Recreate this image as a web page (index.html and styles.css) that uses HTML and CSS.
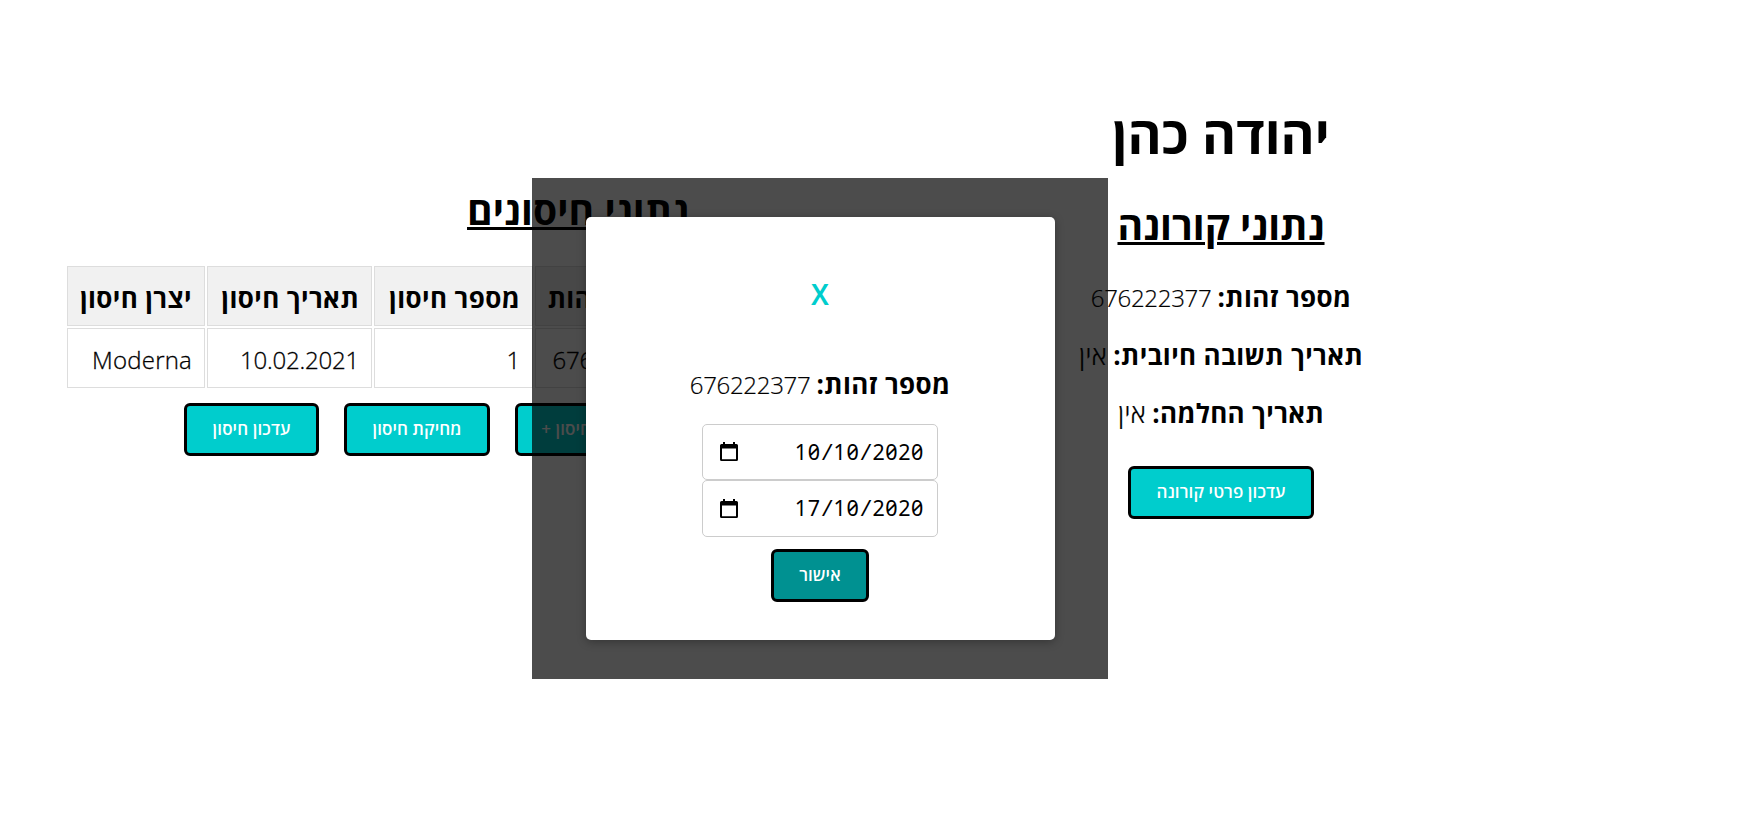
FILE: index.html
```html
<!DOCTYPE html>
<html lang="he">
<head>
<meta charset="utf-8">
<title>יהודה כהן</title>
<link rel="stylesheet" href="styles.css">
</head>
<body>
<main class="page">
  <section class="vaccines">
    <h2 class="vaccines-title" dir="rtl">נתוני חיסונים</h2>
    <table class="table" dir="rtl">
      <colgroup><col class="c-id"><col class="c-num"><col class="c-date"><col class="c-maker"></colgroup>
      <tr><th>מספר זהות</th><th>מספר חיסון</th><th>תאריך חיסון</th><th>יצרן חיסון</th></tr>
      <tr><td>676222377</td><td>1</td><td>10.02.2021</td><td class="maker">Moderna</td></tr>
    </table>
    <div class="actions">
      <button class="btn btn-update" dir="rtl">עדכון חיסון</button>
      <button class="btn btn-delete" dir="rtl">מחיקת חיסון</button>
      <button class="btn btn-add" dir="rtl">הוספת חיסון +</button>
    </div>
  </section>
  <section class="corona" dir="rtl">
    <h1 class="name">יהודה כהן</h1>
    <h2 class="corona-title">נתוני קורונה</h2>
    <p class="fact"><b>מספר זהות:</b> <span>676222377</span></p>
    <p class="fact"><b>תאריך תשובה חיובית:</b> <span class="word">אין</span></p>
    <p class="fact"><b>תאריך החלמה:</b> <span class="word">אין</span></p>
    <button class="btn btn-corona">עדכון פרטי קורונה</button>
  </section>
</main>
<div class="overlay">
  <div class="dialog">
    <button class="close">X</button>
    <p class="fact dialog-fact" dir="rtl"><b>מספר זהות:</b> <span>676222377</span></p>
    <div class="date">
      <svg class="cal" viewBox="0 0 18 20"><path d="M3 0h2v2h8V0h2v2h1.500a1.500 1.500 0 0 1 1.500 1.500v14a1.500 1.500 0 0 1-1.500 1.500h-15A1.500 1.500 0 0 1 0 17.500v-14A1.500 1.500 0 0 1 1.500 2H3zM2 6.500v10.700h14V6.500z" fill-rule="evenodd"/></svg>
      <span class="digits">10<i>/</i>10<i>/</i>2020</span>
    </div>
    <div class="date">
      <svg class="cal" viewBox="0 0 18 20"><path d="M3 0h2v2h8V0h2v2h1.500a1.500 1.500 0 0 1 1.500 1.500v14a1.500 1.500 0 0 1-1.500 1.500h-15A1.500 1.500 0 0 1 0 17.500v-14A1.500 1.500 0 0 1 1.500 2H3zM2 6.500v10.700h14V6.500z" fill-rule="evenodd"/></svg>
      <span class="digits">17<i>/</i>10<i>/</i>2020</span>
    </div>
    <button class="btn btn-ok" dir="rtl">אישור</button>
  </div>
</div>
</body>
</html>
```
FILE: styles.css
```css
* { box-sizing: border-box; }
body { margin: 0; height: 825px; overflow: hidden; position: relative; background: #fff; color: #000; font-family: "Open Sans", "Noto Sans", "DejaVu Sans", sans-serif; font-size: 24px; }
h1, h2, p { margin: 0; white-space: nowrap; }
h1, h2, b { font-weight: 700; }
.page { display: flex; align-items: flex-start; }
.vaccines { width: 1021px; padding: 185px 0 0 65px; }
h2 { height: 50px; line-height: 50px; font-size: 39px; letter-spacing: 0.1px; text-decoration: underline; text-decoration-thickness: 3px; text-underline-offset: 2px; }
.vaccines-title { width: 222px; margin-left: 402px; }
.table { table-layout: fixed; width: 624px; margin-top: 29px; border-spacing: 2px; border-collapse: separate; }
.c-maker { width: 138px; }
.c-date { width: 165px; }
.c-num { width: 159px; }
.c-id { width: 152px; }
.table th, .table td { height: 60px; padding: 4px 12px 0 0; border: 1px solid #ddd; text-align: right; white-space: nowrap; line-height: 34px; }
.table th { background: #f1f1f1; font-weight: 700; font-size: 26px; letter-spacing: 0.4px; }
.table td { font-weight: 300; letter-spacing: -0.2px; -webkit-text-stroke: 0.3px #000; }
.table .maker { letter-spacing: 0.2px; }
.actions { display: flex; gap: 25px; margin: 13px 0 0 119px; }
.btn { display: block; height: 53px; padding: 0 0 2px; border: 3px solid #000; border-radius: 6px; background: #00cdcd; color: #fff; font: 600 17px "Open Sans", "Noto Sans", sans-serif; letter-spacing: 0.1px; white-space: nowrap; }
.btn-update { width: 135px; }
.btn-delete { width: 146px; }
.btn-add { width: 155px; }
.corona { width: 400px; padding-top: 99px; display: flex; flex-direction: column; align-items: center; }
.name { height: 70px; line-height: 70px; font-size: 52px; }
.corona-title { margin-top: 31px; }
.fact { height: 34px; line-height: 34px; margin-top: 24px; }
.fact b { font-size: 26px; letter-spacing: 0.35px; }
.fact span { font-weight: 300; letter-spacing: -0.3px; -webkit-text-stroke: 0.2px #000; }
.fact .word { font-size: 26px; letter-spacing: 0.4px; }
.corona-title + .fact { margin-top: 30px; }
.btn-corona { width: 186px; margin-top: 36px; }
.overlay { position: absolute; left: 532px; top: 178px; width: 576px; height: 501px; padding: 39px 53px 39px 54px; background: rgba(0, 0, 0, 0.7); }
.dialog { height: 423px; padding-right: 1px; background: #fff; border-radius: 5px; box-shadow: 0 2px 10px rgba(0, 0, 0, 0.3); display: flex; flex-direction: column; align-items: center; }
.close { border: 0; padding: 0; background: none; color: #00cdcd; font: 600 28px "Noto Sans", sans-serif; height: 40px; line-height: 38px; margin-top: 57px; }
.dialog-fact { margin-top: 53px; }
.date { width: 236px; height: 56px; border: 1px solid #ccc; border-radius: 5px; padding: 0 13px 0 17px; display: flex; align-items: center; justify-content: space-between; }
.dialog-fact + .date { margin-top: 23px; }
.date + .date { height: 57px; }
.cal { width: 18px; height: 20px; }
.digits { padding-bottom: 2px; font-family: "Noto Sans", monospace; font-size: 21.500px; letter-spacing: 0.6px; font-feature-settings: "zero" 1; }
.digits i { display: inline-block; width: 13px; text-align: center; }
.btn-ok { width: 98px; margin-top: 12px; background: #009191; }
```
